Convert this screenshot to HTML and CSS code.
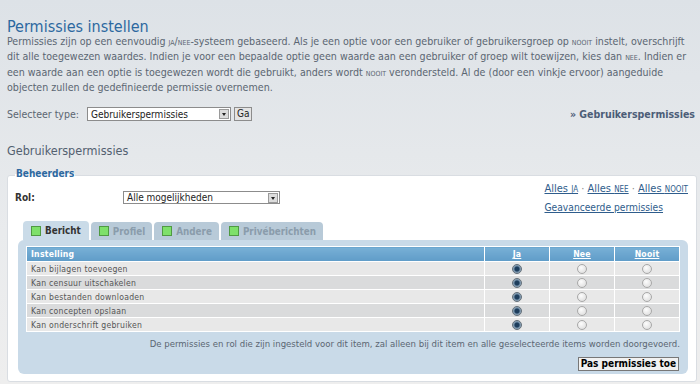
FILE: index.html
```html
<!DOCTYPE html>
<html lang="nl">
<head>
<meta charset="utf-8">
<title>Permissies instellen</title>
<link rel="stylesheet" href="styles.css">
</head>
<body>
<div class="page">
  <h1 class="title">Permissies instellen</h1>
  <p class="intro">Permissies zijn op een eenvoudig <span class="sc">ja/nee</span>-systeem gebaseerd. Als je een optie voor een gebruiker of gebruikersgroep op <span class="sc">nooit</span> instelt, overschrijft<br>dit alle toegewezen waardes. Indien je voor een bepaalde optie geen waarde aan een gebruiker of groep wilt toewijzen, kies dan <span class="sc">nee</span>. Indien er<br>een waarde aan een optie is toegewezen wordt die gebruikt, anders wordt <span class="sc">nooit</span> verondersteld. Al de (door een vinkje ervoor) aangeduide<br>objecten zullen de gedefinieerde permissie overnemen.</p>

  <div class="typerow">
    <div class="typeform">
      <span class="label">Selecteer type:</span>
      <span class="select select-type"><span class="sel-text">Gebruikerspermissies</span><span class="sel-arrow"></span></span>
      <span class="btn-ga">Ga</span>
    </div>
    <div class="crumb">» Gebruikerspermissies</div>
  </div>

  <h2 class="subtitle">Gebruikerspermissies</h2>

  <div class="box">
    <div class="legend">Beheerders</div>
    <div class="rolrow">
      <div class="rolleft">
        <span class="rol">Rol:</span>
        <span class="select select-rol"><span class="sel-text">Alle mogelijkheden</span><span class="sel-arrow"></span></span>
      </div>
      <div class="rolright">
        <div class="alles"><a>Alles <span class="sc">ja</span></a> · <a>Alles <span class="sc">nee</span></a> · <a>Alles <span class="sc">nooit</span></a></div>
        <div class="adv"><a>Geavanceerde permissies</a></div>
      </div>
    </div>

    <div class="tabs">
      <span class="tab active"><i class="sq"></i>Bericht</span>
      <span class="tab"><i class="sq"></i>Profiel</span>
      <span class="tab"><i class="sq"></i>Andere</span>
      <span class="tab"><i class="sq"></i>Privéberichten</span>
    </div>
    <div class="panel">
      <table class="perm">
        <thead>
          <tr><th class="c-name">Instelling</th><th class="c-opt"><a>Ja</a></th><th class="c-opt"><a>Nee</a></th><th class="c-opt"><a>Nooit</a></th></tr>
        </thead>
        <tbody>
          <tr class="r1"><td>Kan bijlagen toevoegen</td><td><i class="radio on"></i></td><td><i class="radio"></i></td><td><i class="radio"></i></td></tr>
          <tr class="r2"><td>Kan censuur uitschakelen</td><td><i class="radio on"></i></td><td><i class="radio"></i></td><td><i class="radio"></i></td></tr>
          <tr class="r1"><td>Kan bestanden downloaden</td><td><i class="radio on"></i></td><td><i class="radio"></i></td><td><i class="radio"></i></td></tr>
          <tr class="r2"><td>Kan concepten opslaan</td><td><i class="radio on"></i></td><td><i class="radio"></i></td><td><i class="radio"></i></td></tr>
          <tr class="r1"><td>Kan onderschrift gebruiken</td><td><i class="radio on"></i></td><td><i class="radio"></i></td><td><i class="radio"></i></td></tr>
        </tbody>
      </table>
      <p class="note">De permissies en rol die zijn ingesteld voor dit item, zal alleen bij dit item en alle geselecteerde items worden doorgevoerd.</p>
      <div class="actions"><span class="btn-apply">Pas permissies toe</span></div>
    </div>
  </div>
</div>
</body>
</html>
```
FILE: styles.css
```css
html, body {
  margin: 0;
  padding: 0;
}
body {
  width: 700px;
  height: 384px;
  overflow: hidden;
  background: linear-gradient(to bottom, #dde2e7 0%, #e9ebed 60%, #eeeeee 100%);
  font-family: "DejaVu Sans Condensed", "DejaVu Sans", sans-serif;
  font-stretch: condensed;
  color: #536070;
}
.page {
  padding: 19px 3px 0 7px;
}
.title {
  margin: 0;
  font-weight: normal;
  font-size: 16px;
  line-height: 15px;
  color: #2c68a0;
}
.intro {
  margin: 0;
  font-size: 10.6px;
  line-height: 15.3px;
  color: #5b6672;
  white-space: nowrap;
}
.sc {
  font-variant: small-caps;
}
.typerow {
  display: flex;
  justify-content: space-between;
  align-items: center;
  margin-top: 12px;
  height: 14px;
}
.typeform {
  display: flex;
  align-items: center;
}
.label {
  font-size: 10.5px;
  color: #5b6672;
  margin-right: 8px;
}
.select {
  display: flex;
  align-items: center;
  justify-content: space-between;
  height: 13px;
  background: #fff;
  border: 1px solid #8c8c8c;
  font-size: 10px;
  color: #222;
  box-sizing: border-box;
}
.sel-text {
  padding-left: 3px;
}
.sel-arrow {
  width: 10px;
  height: 10px;
  margin-right: 1px;
  background: #dcdcdc;
  border: 1px solid #9a9a9a;
  box-sizing: border-box;
  position: relative;
}
.sel-arrow::after {
  content: "";
  position: absolute;
  left: 2px;
  top: 3px;
  border-left: 2px solid transparent;
  border-right: 2px solid transparent;
  border-top: 3px solid #222;
}
.select-type {
  width: 144px;
  height: 14px;
}
.btn-ga {
  margin-left: 3px;
  height: 14px;
  box-sizing: border-box;
  padding: 0 2px;
  border: 1px solid #8c8c8c;
  background: #e4e4e4;
  font-size: 10px;
  line-height: 12px;
  color: #222;
}
.crumb {
  font-size: 10.5px;
  font-weight: bold;
  color: #4c5d77;
  padding-right: 2px;
}
.subtitle {
  margin: 22px 0 0 0;
  font-size: 12.5px;
  line-height: 16px;
  font-weight: normal;
  color: #536070;
}
.box {
  position: relative;
  margin-top: 16px;
  height: 207px;
  background: #fff;
  border: 1px solid #d9dde2;
  border-radius: 3px;
  box-sizing: border-box;
  padding: 0 8px 0 10px;
}
.legend {
  position: absolute;
  left: 7px;
  top: -8px;
  font-size: 10px;
  font-weight: bold;
  color: #2c68a0;
  padding: 0 1px;
  background: linear-gradient(to bottom, transparent 50%, #fff 50%);
}
.rolrow {
  display: flex;
  justify-content: space-between;
  padding-top: 6px;
  height: 40px;
}
.rolleft {
  display: flex;
  align-items: flex-start;
  padding-top: 9px;
}
.rol {
  display: block;
  width: 108px;
  font-size: 10px;
  font-weight: bold;
  color: #333;
  line-height: 14px;
  margin-left: -3px;
}
.select-rol {
  width: 157px;
}
.rolright {
  margin-right: 0;
}
.alles {
  font-size: 11px;
  color: #888;
  line-height: 14px;
}
.alles a, .adv a {
  color: #2f5d8c;
  text-decoration: underline;
}
.adv {
  margin-top: 5px;
  font-size: 10.2px;
  line-height: 14px;
}
.tabs {
  display: flex;
  gap: 2px;
  padding-left: 5px;
  height: 18px;
  align-items: flex-end;
}
.tab {
  display: flex;
  align-items: center;
  height: 18px;
  box-sizing: border-box;
  padding: 0 7px 0 8px;
  background: #b8cad8;
  border-radius: 4px 4px 0 0;
  font-size: 9.8px;
  font-weight: bold;
  color: #8a9cab;
}
.tab.active {
  background: #cadbe8;
  color: #333;
  height: 19px;
  padding: 0 8px 0 8px;
}
.sq {
  display: inline-block;
  width: 8px;
  height: 8px;
  margin-right: 4px;
  background: #7ee06a;
  border: 1px solid #4f9a42;
}
.panel {
  background: #c9dae8;
  border-radius: 6px;
  margin-right: 0;
  padding: 6px 8px 3px 8px;
  height: 134px;
  box-sizing: border-box;
}
.perm {
  width: 100%;
  border-collapse: collapse;
  border: 1px solid #fff;
  font-size: 8.6px;
  letter-spacing: 0.25px;
}
.perm th {
  background: linear-gradient(to bottom, #78b0d6, #5f9cc8);
  color: #fff;
  font-weight: bold;
  height: 14px;
  padding: 0 4px;
  border-left: 1px solid #fff;
  border-bottom: 1px solid #fff;
}
.perm th.c-name {
  text-align: left;
  border-left: none;
}
.perm th.c-opt {
  width: 56px;
  text-align: center;
}
.perm th a {
  color: #fff;
  text-decoration: underline;
}
.perm td {
  height: 13px;
  padding: 0 4px;
  color: #555;
  border-bottom: 1px solid #fff;
  border-left: 1px solid #fff;
  text-align: center;
}
.perm td:first-child {
  text-align: left;
  border-left: none;
}
.r1 td {
  background: #e8e8e8;
}
.r2 td {
  background: #dadbdc;
}
.radio {
  display: inline-block;
  width: 8px;
  height: 8px;
  border-radius: 50%;
  border: 1px solid #a8a8a8;
  background: radial-gradient(circle at 40% 35%, #fdfdfd, #d8d8d8);
  vertical-align: middle;
}
.radio.on {
  border-color: #66717a;
  background: radial-gradient(circle at 50% 50%, #1d3d5c 0 2px, #6d8aa4 3px, #b7c6d2 5px);
}
.note {
  margin: 6px 0 0 0;
  text-align: right;
  font-size: 9.5px;
  line-height: 12px;
  color: #5b6672;
  padding-right: 0;
}
.actions {
  display: flex;
  justify-content: flex-end;
  margin-top: 7px;
  padding-right: 1px;
}
.btn-apply {
  font-size: 10px;
  font-weight: bold;
  color: #000;
  background: #f1f1f1;
  border: 1px solid #777;
  padding: 0 2px;
  line-height: 12px;
}
```
